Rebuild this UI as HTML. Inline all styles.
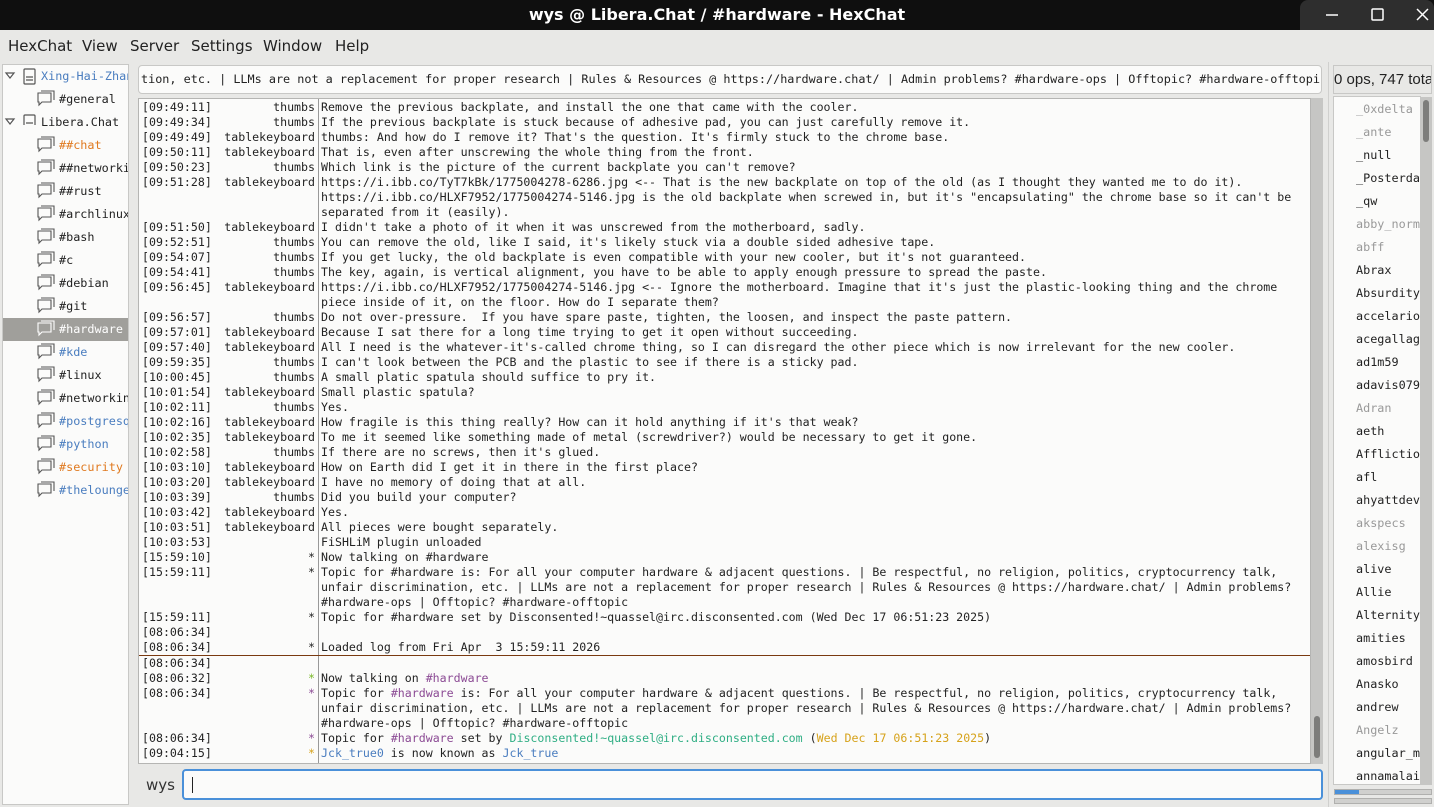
<!DOCTYPE html>
<html><head><meta charset="utf-8"><style>
*{margin:0;padding:0;box-sizing:border-box}
body{width:1434px;height:807px;background:#e8e8e6;font-family:"Liberation Sans","DejaVu Sans",sans-serif;position:relative;overflow:hidden}
#title{position:absolute;left:0;top:0;width:1434px;height:30px;background:#0f0f0f;color:#fff;text-align:center;font:bold 16px "DejaVu Sans",sans-serif;line-height:30px}
#menu{position:absolute;top:30px;left:0;height:32px;width:100%;font:15px "DejaVu Sans",sans-serif;color:#222;line-height:32px}
#menu span{position:absolute}
.mono{font-family:"DejaVu Sans Mono","Liberation Mono",monospace;font-size:11.6px}
#tree{position:absolute;left:2px;top:64px;width:127px;height:741px;background:#fbfbfa;border:1px solid #c8c8c6;overflow:hidden}
.ti{position:absolute;height:23px;line-height:23px;white-space:nowrap;font-family:"DejaVu Sans Mono",monospace;font-size:11.8px;color:#222}
.sel{background:#a09f9b;color:#fff}
#topic{position:absolute;left:138px;top:65px;width:1184px;height:29px;background:#fbfbfa;border:1px solid #c8c8c6;border-radius:4px;overflow:hidden;white-space:pre;line-height:27px;color:#222;font-size:11.8px;padding-left:2px}
#chat{position:absolute;left:138px;top:98px;width:1173px;height:666px;background:#fbfbfa;border:1px solid #b5b5b3;overflow:hidden}
#sep{position:absolute;left:179px;top:0;width:1px;height:100%;background:#999}
#vs{position:absolute;left:1311px;top:98px;width:12px;height:666px;background:#c6c6c4}
.r{position:absolute;left:0;width:100%;height:15px;line-height:15px;white-space:pre;color:#222}
.ts{position:absolute;left:3px}
.nk{position:absolute;left:0;width:176px;text-align:right}
.tx{position:absolute;left:182px}
.pu{color:#8b4a94}.gr{color:#2fae84}.ye{color:#d6a21a}.bl{color:#4a7dbf}
#input{position:absolute;left:182px;top:769px;width:1141px;height:31px;background:#fbfbfa;border:2px solid #4a90d9;border-radius:4px}
#users{position:absolute;left:1333px;top:96px;width:88px;height:689px;background:#fbfbfa;border:1px solid #c8c8c6;overflow:hidden}
.u{position:absolute;left:22px;height:23px;line-height:23px;font-family:"DejaVu Sans Mono",monospace;font-size:11.8px;color:#222;white-space:nowrap}
.g{color:#999}
</style></head><body>
<div id="title">wys @ Libera.Chat / #hardware - HexChat</div>
<div style="position:absolute;left:1300px;top:0;width:134px;height:30px;background:#2e2e2e;border-radius:8px 8px 0 0"></div>
<svg style="position:absolute;left:1300px;top:0" width="134" height="30"><line x1="26" y1="15" x2="38" y2="15" stroke="#fff" stroke-width="1.5"/><rect x="72" y="9" width="11" height="11" fill="none" stroke="#fff" stroke-width="1.5" rx="1"/><path d="M117 9 L128 20 M128 9 L117 20" stroke="#fff" stroke-width="1.5"/></svg>
<div id="menu"><span style="left:8px">HexChat</span><span style="left:82px">View</span><span style="left:130px">Server</span><span style="left:191px">Settings</span><span style="left:263px">Window</span><span style="left:335px">Help</span></div>
<div id="tree">
<svg style="position:absolute;left:0;top:0" width="127" height="60"><g fill="none" stroke="#555" stroke-width="1.2">
<path d="M3 8 L11 8 L7 13Z" fill="#fff"/><path d="M3 54 L11 54 L7 59Z" fill="#fff"/>
<rect x="21" y="4" width="11" height="15" rx="1"/><rect x="21" y="50" width="11" height="15" rx="1"/>
<path d="M23 12h7 M23 15h7 M23 58h7 M23 61h7"/>
</g></svg>
<div class="ti" style="left:38px;top:0px;color:#4a7dbf">Xing-Hai-Zhang</div>
<div class="ti" style="left:56px;top:23px">#general</div>
<div class="ti" style="left:38px;top:46px">Libera.Chat</div>
<div class="ti" style="left:56px;top:69px;color:#e07a20">##chat</div>
<div class="ti" style="left:56px;top:92px">##networking</div>
<div class="ti" style="left:56px;top:115px">##rust</div>
<div class="ti" style="left:56px;top:138px">#archlinux</div>
<div class="ti" style="left:56px;top:161px">#bash</div>
<div class="ti" style="left:56px;top:184px">#c</div>
<div class="ti" style="left:56px;top:207px">#debian</div>
<div class="ti" style="left:56px;top:230px">#git</div>
<div class="ti sel" style="left:0;width:127px;padding-left:56px;top:253px">#hardware</div>
<div class="ti" style="left:56px;top:276px;color:#4a7dbf">#kde</div>
<div class="ti" style="left:56px;top:299px">#linux</div>
<div class="ti" style="left:56px;top:322px">#networking</div>
<div class="ti" style="left:56px;top:345px;color:#4a7dbf">#postgresql</div>
<div class="ti" style="left:56px;top:368px;color:#4a7dbf">#python</div>
<div class="ti" style="left:56px;top:391px;color:#e07a20">#security</div>
<div class="ti" style="left:56px;top:414px;color:#4a7dbf">#thelounge</div>
<svg style="position:absolute;left:0;top:0" width="60" height="440"><g fill="none" stroke="#555" stroke-width="1.1">
<path d="M35 28h13v9h-9l-3 3v-3h-1z M38 26h13v9"/>
<path d="M35 74h13v9h-9l-3 3v-3h-1z M38 72h13v9"/>
<path d="M35 97h13v9h-9l-3 3v-3h-1z M38 95h13v9"/>
<path d="M35 120h13v9h-9l-3 3v-3h-1z M38 118h13v9"/>
<path d="M35 143h13v9h-9l-3 3v-3h-1z M38 141h13v9"/>
<path d="M35 166h13v9h-9l-3 3v-3h-1z M38 164h13v9"/>
<path d="M35 189h13v9h-9l-3 3v-3h-1z M38 187h13v9"/>
<path d="M35 212h13v9h-9l-3 3v-3h-1z M38 210h13v9"/>
<path d="M35 235h13v9h-9l-3 3v-3h-1z M38 233h13v9"/>
<path d="M35 258h13v9h-9l-3 3v-3h-1z M38 256h13v9" stroke="#fff"/>
<path d="M35 281h13v9h-9l-3 3v-3h-1z M38 279h13v9"/>
<path d="M35 304h13v9h-9l-3 3v-3h-1z M38 302h13v9"/>
<path d="M35 327h13v9h-9l-3 3v-3h-1z M38 325h13v9"/>
<path d="M35 350h13v9h-9l-3 3v-3h-1z M38 348h13v9"/>
<path d="M35 373h13v9h-9l-3 3v-3h-1z M38 371h13v9"/>
<path d="M35 396h13v9h-9l-3 3v-3h-1z M38 394h13v9"/>
<path d="M35 419h13v9h-9l-3 3v-3h-1z M38 417h13v9"/>
</g></svg>
</div>
<div id="topic" class="mono">tion, etc. | LLMs are not a replacement for proper research | Rules &amp; Resources @ https://hardware.chat/ | Admin problems? #hardware-ops | Offtopic? #hardware-offtopic</div>
<div id="chat" class="mono"><div id="sep"></div>
<div class="r" style="top:1px"><span class="ts">[09:49:11]</span><span class="nk">thumbs</span><span class="tx">Remove the previous backplate, and install the one that came with the cooler.</span></div>
<div class="r" style="top:16px"><span class="ts">[09:49:34]</span><span class="nk">thumbs</span><span class="tx">If the previous backplate is stuck because of adhesive pad, you can just carefully remove it.</span></div>
<div class="r" style="top:31px"><span class="ts">[09:49:49]</span><span class="nk">tablekeyboard</span><span class="tx">thumbs: And how do I remove it? That's the question. It's firmly stuck to the chrome base.</span></div>
<div class="r" style="top:46px"><span class="ts">[09:50:11]</span><span class="nk">tablekeyboard</span><span class="tx">That is, even after unscrewing the whole thing from the front.</span></div>
<div class="r" style="top:61px"><span class="ts">[09:50:23]</span><span class="nk">thumbs</span><span class="tx">Which link is the picture of the current backplate you can't remove?</span></div>
<div class="r" style="top:76px"><span class="ts">[09:51:28]</span><span class="nk">tablekeyboard</span><span class="tx">https://i.ibb.co/TyT7kBk/1775004278-6286.jpg &lt;-- That is the new backplate on top of the old (as I thought they wanted me to do it).
https://i.ibb.co/HLXF7952/1775004274-5146.jpg is the old backplate when screwed in, but it's "encapsulating" the chrome base so it can't be
separated from it (easily).</span></div>
<div class="r" style="top:121px"><span class="ts">[09:51:50]</span><span class="nk">tablekeyboard</span><span class="tx">I didn't take a photo of it when it was unscrewed from the motherboard, sadly.</span></div>
<div class="r" style="top:136px"><span class="ts">[09:52:51]</span><span class="nk">thumbs</span><span class="tx">You can remove the old, like I said, it's likely stuck via a double sided adhesive tape.</span></div>
<div class="r" style="top:151px"><span class="ts">[09:54:07]</span><span class="nk">thumbs</span><span class="tx">If you get lucky, the old backplate is even compatible with your new cooler, but it's not guaranteed.</span></div>
<div class="r" style="top:166px"><span class="ts">[09:54:41]</span><span class="nk">thumbs</span><span class="tx">The key, again, is vertical alignment, you have to be able to apply enough pressure to spread the paste.</span></div>
<div class="r" style="top:181px"><span class="ts">[09:56:45]</span><span class="nk">tablekeyboard</span><span class="tx">https://i.ibb.co/HLXF7952/1775004274-5146.jpg &lt;-- Ignore the motherboard. Imagine that it's just the plastic-looking thing and the chrome
piece inside of it, on the floor. How do I separate them?</span></div>
<div class="r" style="top:211px"><span class="ts">[09:56:57]</span><span class="nk">thumbs</span><span class="tx">Do not over-pressure.  If you have spare paste, tighten, the loosen, and inspect the paste pattern.</span></div>
<div class="r" style="top:226px"><span class="ts">[09:57:01]</span><span class="nk">tablekeyboard</span><span class="tx">Because I sat there for a long time trying to get it open without succeeding.</span></div>
<div class="r" style="top:241px"><span class="ts">[09:57:40]</span><span class="nk">tablekeyboard</span><span class="tx">All I need is the whatever-it's-called chrome thing, so I can disregard the other piece which is now irrelevant for the new cooler.</span></div>
<div class="r" style="top:256px"><span class="ts">[09:59:35]</span><span class="nk">thumbs</span><span class="tx">I can't look between the PCB and the plastic to see if there is a sticky pad.</span></div>
<div class="r" style="top:271px"><span class="ts">[10:00:45]</span><span class="nk">thumbs</span><span class="tx">A small platic spatula should suffice to pry it.</span></div>
<div class="r" style="top:286px"><span class="ts">[10:01:54]</span><span class="nk">tablekeyboard</span><span class="tx">Small plastic spatula?</span></div>
<div class="r" style="top:301px"><span class="ts">[10:02:11]</span><span class="nk">thumbs</span><span class="tx">Yes.</span></div>
<div class="r" style="top:316px"><span class="ts">[10:02:16]</span><span class="nk">tablekeyboard</span><span class="tx">How fragile is this thing really? How can it hold anything if it's that weak?</span></div>
<div class="r" style="top:331px"><span class="ts">[10:02:35]</span><span class="nk">tablekeyboard</span><span class="tx">To me it seemed like something made of metal (screwdriver?) would be necessary to get it gone.</span></div>
<div class="r" style="top:346px"><span class="ts">[10:02:58]</span><span class="nk">thumbs</span><span class="tx">If there are no screws, then it's glued.</span></div>
<div class="r" style="top:361px"><span class="ts">[10:03:10]</span><span class="nk">tablekeyboard</span><span class="tx">How on Earth did I get it in there in the first place?</span></div>
<div class="r" style="top:376px"><span class="ts">[10:03:20]</span><span class="nk">tablekeyboard</span><span class="tx">I have no memory of doing that at all.</span></div>
<div class="r" style="top:391px"><span class="ts">[10:03:39]</span><span class="nk">thumbs</span><span class="tx">Did you build your computer?</span></div>
<div class="r" style="top:406px"><span class="ts">[10:03:42]</span><span class="nk">tablekeyboard</span><span class="tx">Yes.</span></div>
<div class="r" style="top:421px"><span class="ts">[10:03:51]</span><span class="nk">tablekeyboard</span><span class="tx">All pieces were bought separately.</span></div>
<div class="r" style="top:436px"><span class="ts">[10:03:53]</span><span class="tx">FiSHLiM plugin unloaded</span></div>
<div class="r" style="top:451px"><span class="ts">[15:59:10]</span><span class="nk">*</span><span class="tx">Now talking on #hardware</span></div>
<div class="r" style="top:466px"><span class="ts">[15:59:11]</span><span class="nk">*</span><span class="tx">Topic for #hardware is: For all your computer hardware &amp; adjacent questions. | Be respectful, no religion, politics, cryptocurrency talk,
unfair discrimination, etc. | LLMs are not a replacement for proper research | Rules &amp; Resources @ https://hardware.chat/ | Admin problems?
#hardware-ops | Offtopic? #hardware-offtopic</span></div>
<div class="r" style="top:511px"><span class="ts">[15:59:11]</span><span class="nk">*</span><span class="tx">Topic for #hardware set by Disconsented!~quassel@irc.disconsented.com (Wed Dec 17 06:51:23 2025)</span></div>
<div class="r" style="top:526px"><span class="ts">[08:06:34]</span></div>
<div class="r" style="top:541px"><span class="ts">[08:06:34]</span><span class="nk">*</span><span class="tx">Loaded log from Fri Apr  3 15:59:11 2026</span></div>
<div style="position:absolute;left:0;top:556px;width:100%;height:1px;background:#7a3a10"></div>
<div class="r" style="top:557px"><span class="ts">[08:06:34]</span></div>
<div class="r" style="top:572px"><span class="ts">[08:06:32]</span><span class="nk" style="color:#7ab828">*</span><span class="tx">Now talking on <span class="pu">#hardware</span></span></div>
<div class="r" style="top:587px"><span class="ts">[08:06:34]</span><span class="nk pu">*</span><span class="tx">Topic for <span class="pu">#hardware</span> is: For all your computer hardware &amp; adjacent questions. | Be respectful, no religion, politics, cryptocurrency talk,
unfair discrimination, etc. | LLMs are not a replacement for proper research | Rules &amp; Resources @ https://hardware.chat/ | Admin problems?
#hardware-ops | Offtopic? #hardware-offtopic</span></div>
<div class="r" style="top:632px"><span class="ts">[08:06:34]</span><span class="nk pu">*</span><span class="tx">Topic for <span class="pu">#hardware</span> set by <span class="gr">Disconsented!~quassel@irc.disconsented.com</span> (<span class="ye">Wed Dec 17 06:51:23 2025</span>)</span></div>
<div class="r" style="top:647px"><span class="ts">[09:04:15]</span><span class="nk ye">*</span><span class="tx"><span class="bl">Jck_true0</span> is now known as <span class="bl">Jck_true</span></span></div>
</div>
<div id="vs"><div style="position:absolute;left:3px;top:618px;width:6px;height:42px;background:#7d7d7b;border-radius:3px"></div></div>
<div style="position:absolute;left:146px;top:776px;font:15px 'DejaVu Sans',sans-serif;color:#333">wys</div>
<div id="input"><div style="position:absolute;left:8px;top:6px;width:1px;height:16px;background:#222"></div></div>
<div style="position:absolute;left:1328px;top:62px;width:1px;height:745px;background:#d0d0ce"></div>
<div style="position:absolute;left:1333px;top:65px;width:99px;height:29px;background:#e8e8e6;border:1px solid #c8c8c6;overflow:hidden;white-space:nowrap;font:15px 'Liberation Sans',sans-serif;line-height:27px;color:#222">0 ops, 747 total</div>
<div id="users">
<div class="u g" style="top:1px">_0xdelta</div><div class="u g" style="top:24px">_ante</div><div class="u" style="top:47px">_null</div><div class="u" style="top:70px">_Posterdati</div><div class="u" style="top:93px">_qw</div><div class="u g" style="top:116px">abby_normal</div><div class="u g" style="top:139px">abff</div><div class="u" style="top:162px">Abrax</div><div class="u" style="top:185px">Absurdity</div><div class="u" style="top:208px">accelario</div><div class="u" style="top:231px">acegallagher</div><div class="u" style="top:254px">ad1m59</div><div class="u" style="top:277px">adavis0799</div><div class="u g" style="top:300px">Adran</div><div class="u" style="top:323px">aeth</div><div class="u" style="top:346px">Affliction</div><div class="u" style="top:369px">afl</div><div class="u" style="top:392px">ahyattdev</div><div class="u g" style="top:415px">akspecs</div><div class="u g" style="top:438px">alexisg</div><div class="u" style="top:461px">alive</div><div class="u" style="top:484px">Allie</div><div class="u" style="top:507px">Alternity</div><div class="u" style="top:530px">amities</div><div class="u" style="top:553px">amosbird</div><div class="u" style="top:576px">Anasko</div><div class="u" style="top:599px">andrew</div><div class="u g" style="top:622px">Angelz</div><div class="u" style="top:645px">angular_mike</div><div class="u" style="top:668px">annamalai</div>
</div>
<div style="position:absolute;left:1420px;top:97px;width:12px;height:688px;background:#c6c6c4"><div style="position:absolute;left:3px;top:3px;width:6px;height:42px;background:#7d7d7b;border-radius:3px"></div></div>
<div style="position:absolute;left:1334px;top:789px;width:98px;height:6px;background:#d0d0ce;border:1px solid #b0b0ae"><div style="width:24px;height:4px;background:#4a90d9"></div></div>
<div style="position:absolute;left:1334px;top:798px;width:98px;height:6px;background:#d0d0ce;border:1px solid #b0b0ae"></div>
</body></html>
